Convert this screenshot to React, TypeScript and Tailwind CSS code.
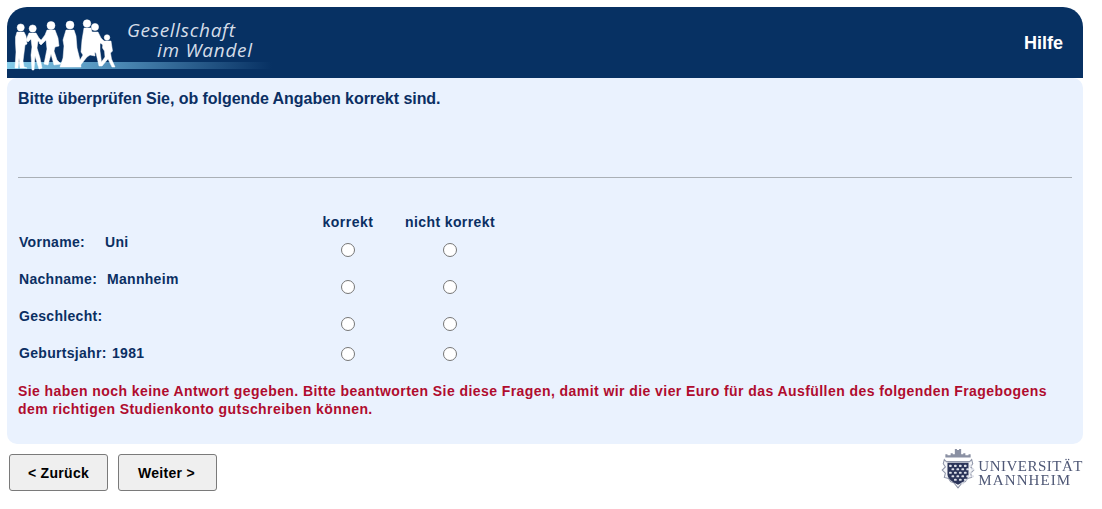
const rows = [
  { label: "Vorname:", value: "Uni", gap: "w-[86px]", height: "h-[37px]", radioTop: "pt-[9px]" },
  { label: "Nachname:", value: "Mannheim", gap: "w-[88px]", height: "h-[37px]", radioTop: "pt-[9px]" },
  { label: "Geschlecht:", value: "", gap: "w-[88px]", height: "h-[37px]", radioTop: "pt-[9px]" },
  { label: "Geburtsjahr:", value: "1981", gap: "w-[93px]", height: "h-[30px]", radioTop: "pt-[2px]" },
];

function Crowd() {
  return (
    <svg width="110" height="60" viewBox="0 0 110 60" className="absolute left-[3px] top-[8px] blur-[0.3px]" fill="#fff" stroke="#fff" strokeWidth="0.5" strokeLinejoin="round">
      {/* man on the left */}
      <circle cx="10.700" cy="12.500" r="3.600" />
      <path d="M7 17h7l2 4 1 8-2 1-1 8-1 8 1 6 3 1H10l-1-10-1 10H5l1-16-.5-9L5.500 22z" />
      {/* woman */}
      <circle cx="22.700" cy="13.500" r="3.600" />
      <path d="M19 18h7l3 5 3 3-1 2-3-2-1 7 3 10 2 10-3 1-4-13-1 14h-2l-1-15 1-8-1-8-3 3-2-2z" />
      {/* man with jacket */}
      <circle cx="41" cy="10.500" r="4" />
      <path d="M37 15h8l3 8 1 8-4 1-1 4 3 9 4 4-7 1-3-11-3 11-4-1 3-15-1-9-5 5-2-2 6-8z" />
      {/* woman in long dress */}
      <circle cx="60" cy="10" r="4" />
      <path d="M56 15h8l2 6 1 12 3 12 1 7H50l3-9 1-12-1-6z" />
      {/* pair walking */}
      <circle cx="77" cy="8.500" r="3.800" />
      <path d="M74 13h7l2 8 1 10 1 10-5-1-3 2-8 10-2-2 6-10-2-3 1-12z" />
      <circle cx="85" cy="12" r="3.600" />
      <path d="M81 17h7l3 6 7 7-1 2-7-4 0 8 2 15-3 0-3-13-4-2z" />
      {/* child */}
      <circle cx="97" cy="22.500" r="2.800" />
      <path d="M93 26h8l1.500 10-2 2 1 6 3.500 8-3 0-4-8-6 7-2-2 5-7-.5-6-2-3z" />
    </svg>
  );
}

function Crest() {
  const cells: number[][] = [];
  for (let r = 0; r < 6; r++) {
    for (let c = 0; c < 5; c++) {
      if ((r < 4 || (c > 0 && c < 4)) && !(r === 5 && c !== 2)) {
        cells.push([10.500 + c * 4.700 + (r % 2 ? 2.300 : 0), 17 + r * 3.300]);
      }
    }
  }
  return (
    <svg width="38" height="40" viewBox="3 2 32 38" className="shrink-0">
      <path d="M7 10V7h2v1h3V6h2v1h2V2h2v1h2V2h2v5h2V6h2v2h3V7h2v3z" fill="#8a90a3" />
      <path d="M6 12l2 2h22l2-2 1 4-2 3 3 3-3 3 1 4-4 1-2 3-3 1-4 5-4-5-3-1-2-3-4-1 1-4-3-3 3-3-2-3z" fill="#f4f5f8" stroke="#8f95a8" strokeWidth="1" />
      <path d="M9 15h20v11c0 4-4 7-10 10-6-3-10-6-10-10z" fill="#2b3459" />
      <g fill="#dfe2ea">
        {cells.map(([x, y], i) => (
          <rect key={i} x={x} y={y} width="2.600" height="2" rx="0.800" />
        ))}
      </g>
    </svg>
  );
}

export default function App() {
  return (
    <div className="relative h-[509px] w-[1102px] overflow-hidden bg-white pl-[7px] pt-[7px] font-['Liberation_Sans',Arial,sans-serif]">
      <header className="relative flex h-[71px] w-[1076px] items-center justify-end overflow-hidden rounded-t-[20px] bg-[#073163]">
        <div className="absolute bottom-[9px] left-0 h-[7px] w-[265px] bg-gradient-to-r from-[#86cdea] via-[#4f8db8] via-40% to-[#073163]" />
        <Crowd />
        <div className="absolute left-[120px] top-[13px] font-['Open_Sans',sans-serif] text-[19px] italic leading-[20px] tracking-[0.7px] text-[#d5dde8]">
          <div>Gesellschaft</div>
          <div className="pl-[30px]">im Wandel</div>
        </div>
        <span className="pr-[20px] text-lg font-bold text-white">Hilfe</span>
      </header>

      <main className="h-[366px] w-[1076px] rounded-[10px] bg-[#eaf2fe] px-[11px] text-[#0b2f63]">
        <p className="pt-[11px] text-base font-bold leading-[19px] tracking-[-0.05px]">Bitte überprüfen Sie, ob folgende Angaben korrekt sind.</p>
        <hr className="mt-[69px] border-t border-[#aab0b6]" />

        <div className="mt-[36px] flex text-sm font-bold leading-4">
          <div className="w-[279px]" />
          <div className="w-[102px] text-center tracking-[0.5px]">korrekt</div>
          <div className="w-[102px] text-center tracking-[0.4px]">nicht korrekt</div>
        </div>
        <div className="mt-[4px]">
          {rows.map((row) => (
            <div key={row.label} className={`flex text-sm font-bold leading-4 ${row.height}`}>
              <div className="flex w-[279px] pl-px tracking-[0.3px]">
                <span className={row.gap}>{row.label}</span>
                <span>{row.value}</span>
              </div>
              <div className={`flex w-[102px] justify-center ${row.radioTop}`}>
                <input type="radio" name={row.label} className="m-0 size-[14px] appearance-none rounded-full border border-[#767676] bg-white" />
              </div>
              <div className={`flex w-[102px] justify-center ${row.radioTop}`}>
                <input type="radio" name={row.label + "2"} className="m-0 size-[14px] appearance-none rounded-full border border-[#767676] bg-white" />
              </div>
            </div>
          ))}
        </div>
        <p className="mt-[7px] text-sm font-bold leading-[18px] tracking-[0.43px] text-[#b00c2e]">
          Sie haben noch keine Antwort gegeben. Bitte beantworten Sie diese Fragen, damit wir die vier Euro für das Ausfüllen des folgenden Fragebogens dem richtigen Studienkonto gutschreiben können.
        </p>
      </main>

      <footer className="flex w-[1076px] items-start justify-between pl-[2px] pt-[10px]">
        <div className="flex gap-[10px]">
          <button className="h-[37px] w-[99px] rounded-[3px] border border-[#7a7a7a] bg-[#efefef] text-sm font-bold tracking-[0.3px] text-black">&lt; Zurück</button>
          <button className="h-[37px] w-[99px] rounded-[3px] border border-[#7a7a7a] bg-[#efefef] pr-[2px] text-sm font-bold tracking-[0.3px] text-black">Weiter &gt;</button>
        </div>
        <div className="-mt-[5px] flex items-center blur-[0.3px]">
          <Crest />
          <div className="pl-[1px] pt-[8px] font-['Liberation_Serif',serif] text-[15px] leading-[14px] tracking-[0.5px] text-[#4f5876]">
            <div>UNIVERSITÄT</div>
            <div className="tracking-[1.100px]">MANNHEIM</div>
          </div>
        </div>
      </footer>
    </div>
  );
}
